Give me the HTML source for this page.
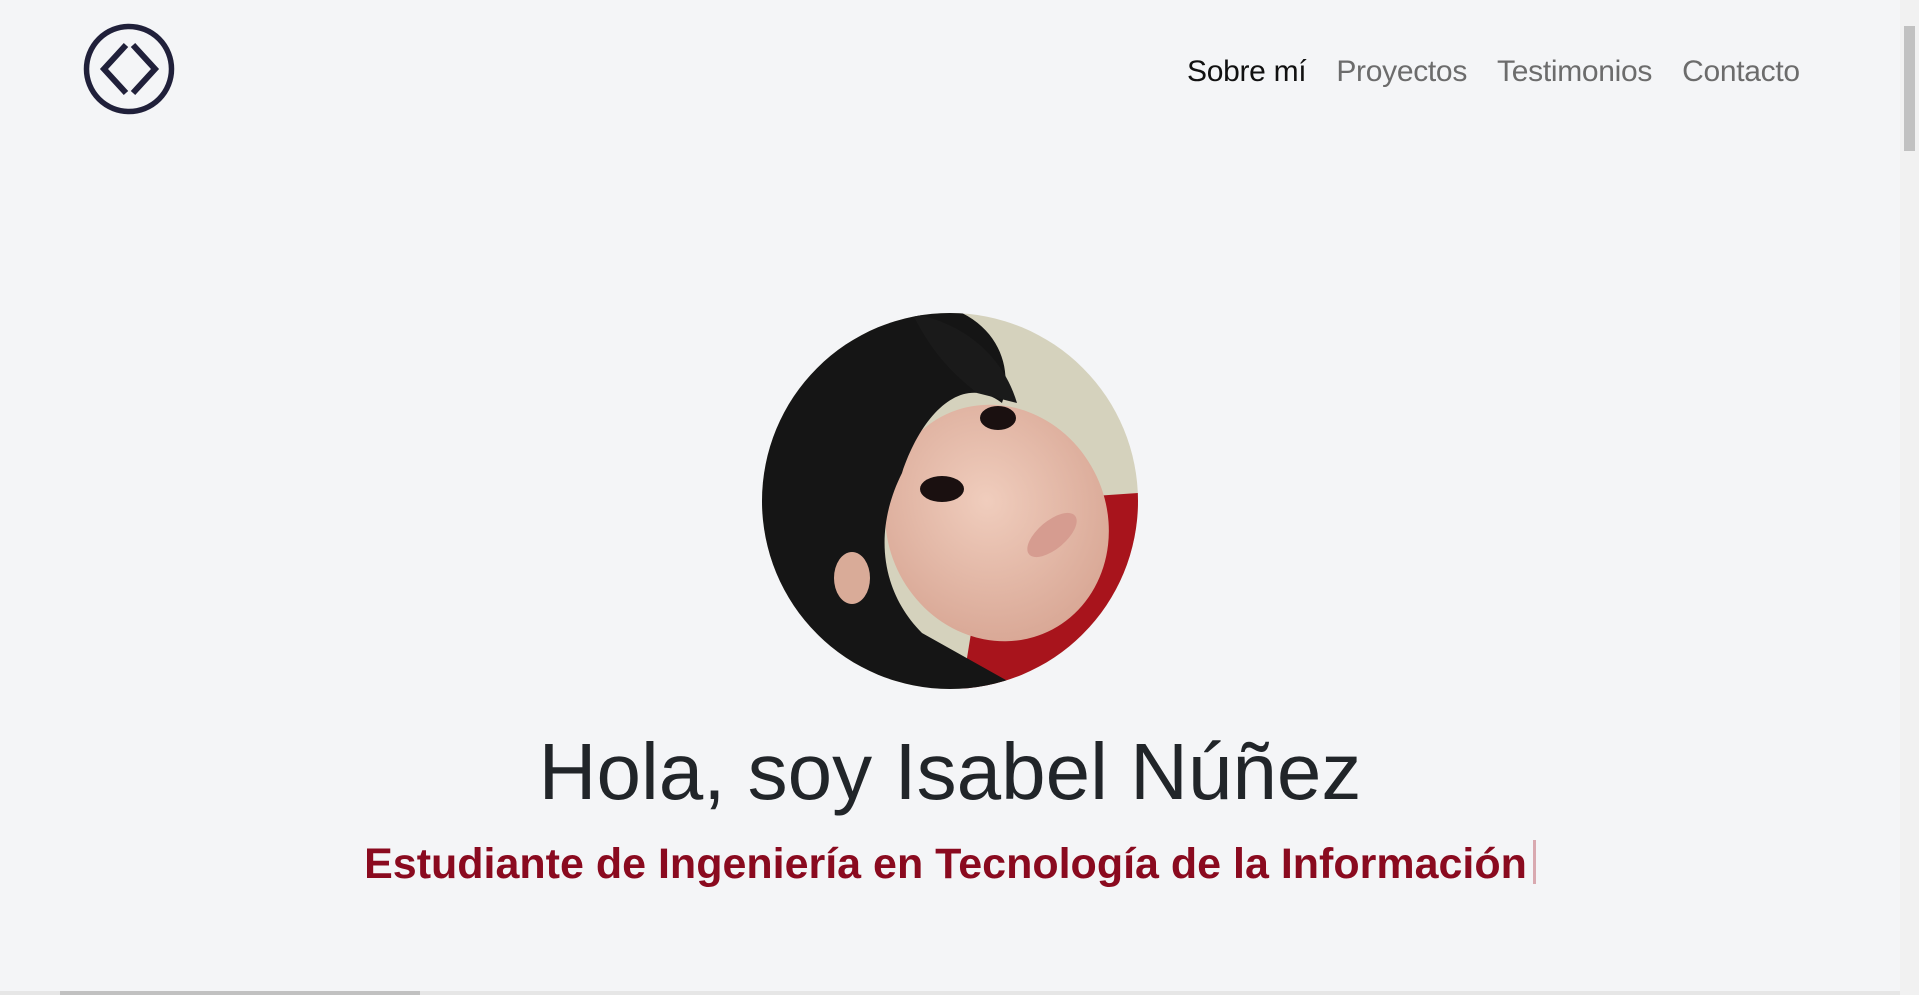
<!DOCTYPE html>
<html><head><meta charset="utf-8"><style>
html,body{margin:0;padding:0;width:1919px;height:995px;overflow:hidden;background:#f4f5f7;font-family:"Liberation Sans",sans-serif}
.nav{position:absolute;top:55px;left:1187px;font-size:30px;color:#6c6c6c;white-space:nowrap;letter-spacing:-0.3px}
.nav span{margin-right:30px}
.nav span:first-child{color:#111}
.photo{position:absolute;left:762px;top:313px;width:376px;height:376px}
h1{position:absolute;left:0;width:1900px;top:722px;margin:0;text-align:center;font-weight:normal;font-size:80px;color:#212529;line-height:100px}
.sub{position:absolute;left:0;width:1900px;top:836px;text-align:center;font-size:43px;color:#8a0a1f;font-weight:bold;line-height:56px}
.sub i{display:inline-block;width:3px;height:44px;background:#d9a9b0;vertical-align:-6px;margin-left:6px}
.vs{position:absolute;right:0;top:0;width:19px;height:995px;background:#f1f1f1}
.vs b{position:absolute;left:4px;top:26px;width:11px;height:125px;background:#c1c1c1}
.hs{position:absolute;left:0;bottom:0;width:1900px;height:4px;background:#e6e6e6}
.hs b{position:absolute;left:60px;width:360px;height:4px;background:#c1c1c1}
</style></head><body>
<svg style="position:absolute;left:80px;top:22px" width="98" height="98" viewBox="0 0 98 98">
<circle cx="49" cy="47" r="42.5" fill="none" stroke="#20203a" stroke-width="5.5"/>
<path d="M46 23 L24 47 L46 71" fill="none" stroke="#20203a" stroke-width="6"/>
<path d="M53 23 L75 47 L53 71" fill="none" stroke="#20203a" stroke-width="6"/>
</svg>
<div class="nav"><span>Sobre mí</span><span>Proyectos</span><span>Testimonios</span><span style="margin:0">Contacto</span></div>
<svg class="photo" viewBox="0 0 376 376">
<defs><clipPath id="c"><circle cx="188" cy="188" r="188"/></clipPath>
<radialGradient id="sk" cx="0.5" cy="0.4" r="0.6"><stop offset="0" stop-color="#f0cdbd"/><stop offset="1" stop-color="#d9a896"/></radialGradient></defs>
<g clip-path="url(#c)">
<rect width="376" height="376" fill="#d5d2bd"/>
<path d="M230 190 L376 180 L376 376 L200 376 Z" fill="#a8141c"/>
<ellipse cx="235" cy="210" rx="110" ry="120" transform="rotate(-25 235 210)" fill="url(#sk)"/>
<path d="M0 0 L200 0 C240 20 250 60 240 90 C200 60 160 100 140 160 C110 220 120 280 160 320 L260 376 L0 376 Z" fill="#151515"/>
<path d="M150 0 C200 10 240 40 255 90 L215 80 C190 60 170 40 150 0Z" fill="#1a1a1a"/>
<ellipse cx="180" cy="176" rx="22" ry="13" fill="#1a1010"/>
<ellipse cx="236" cy="105" rx="18" ry="12" fill="#1a1010"/>
<ellipse cx="290" cy="222" rx="30" ry="14" transform="rotate(-40 290 222)" fill="#d69c90"/>
<ellipse cx="90" cy="265" rx="18" ry="26" fill="#d9ab98"/>
</g></svg>
<h1>Hola, soy Isabel Núñez</h1>
<div class="sub">Estudiante de Ingeniería en Tecnología de la Información<i></i></div>
<div class="vs"><b></b></div>
<div class="hs"><b></b></div>
</body></html>
